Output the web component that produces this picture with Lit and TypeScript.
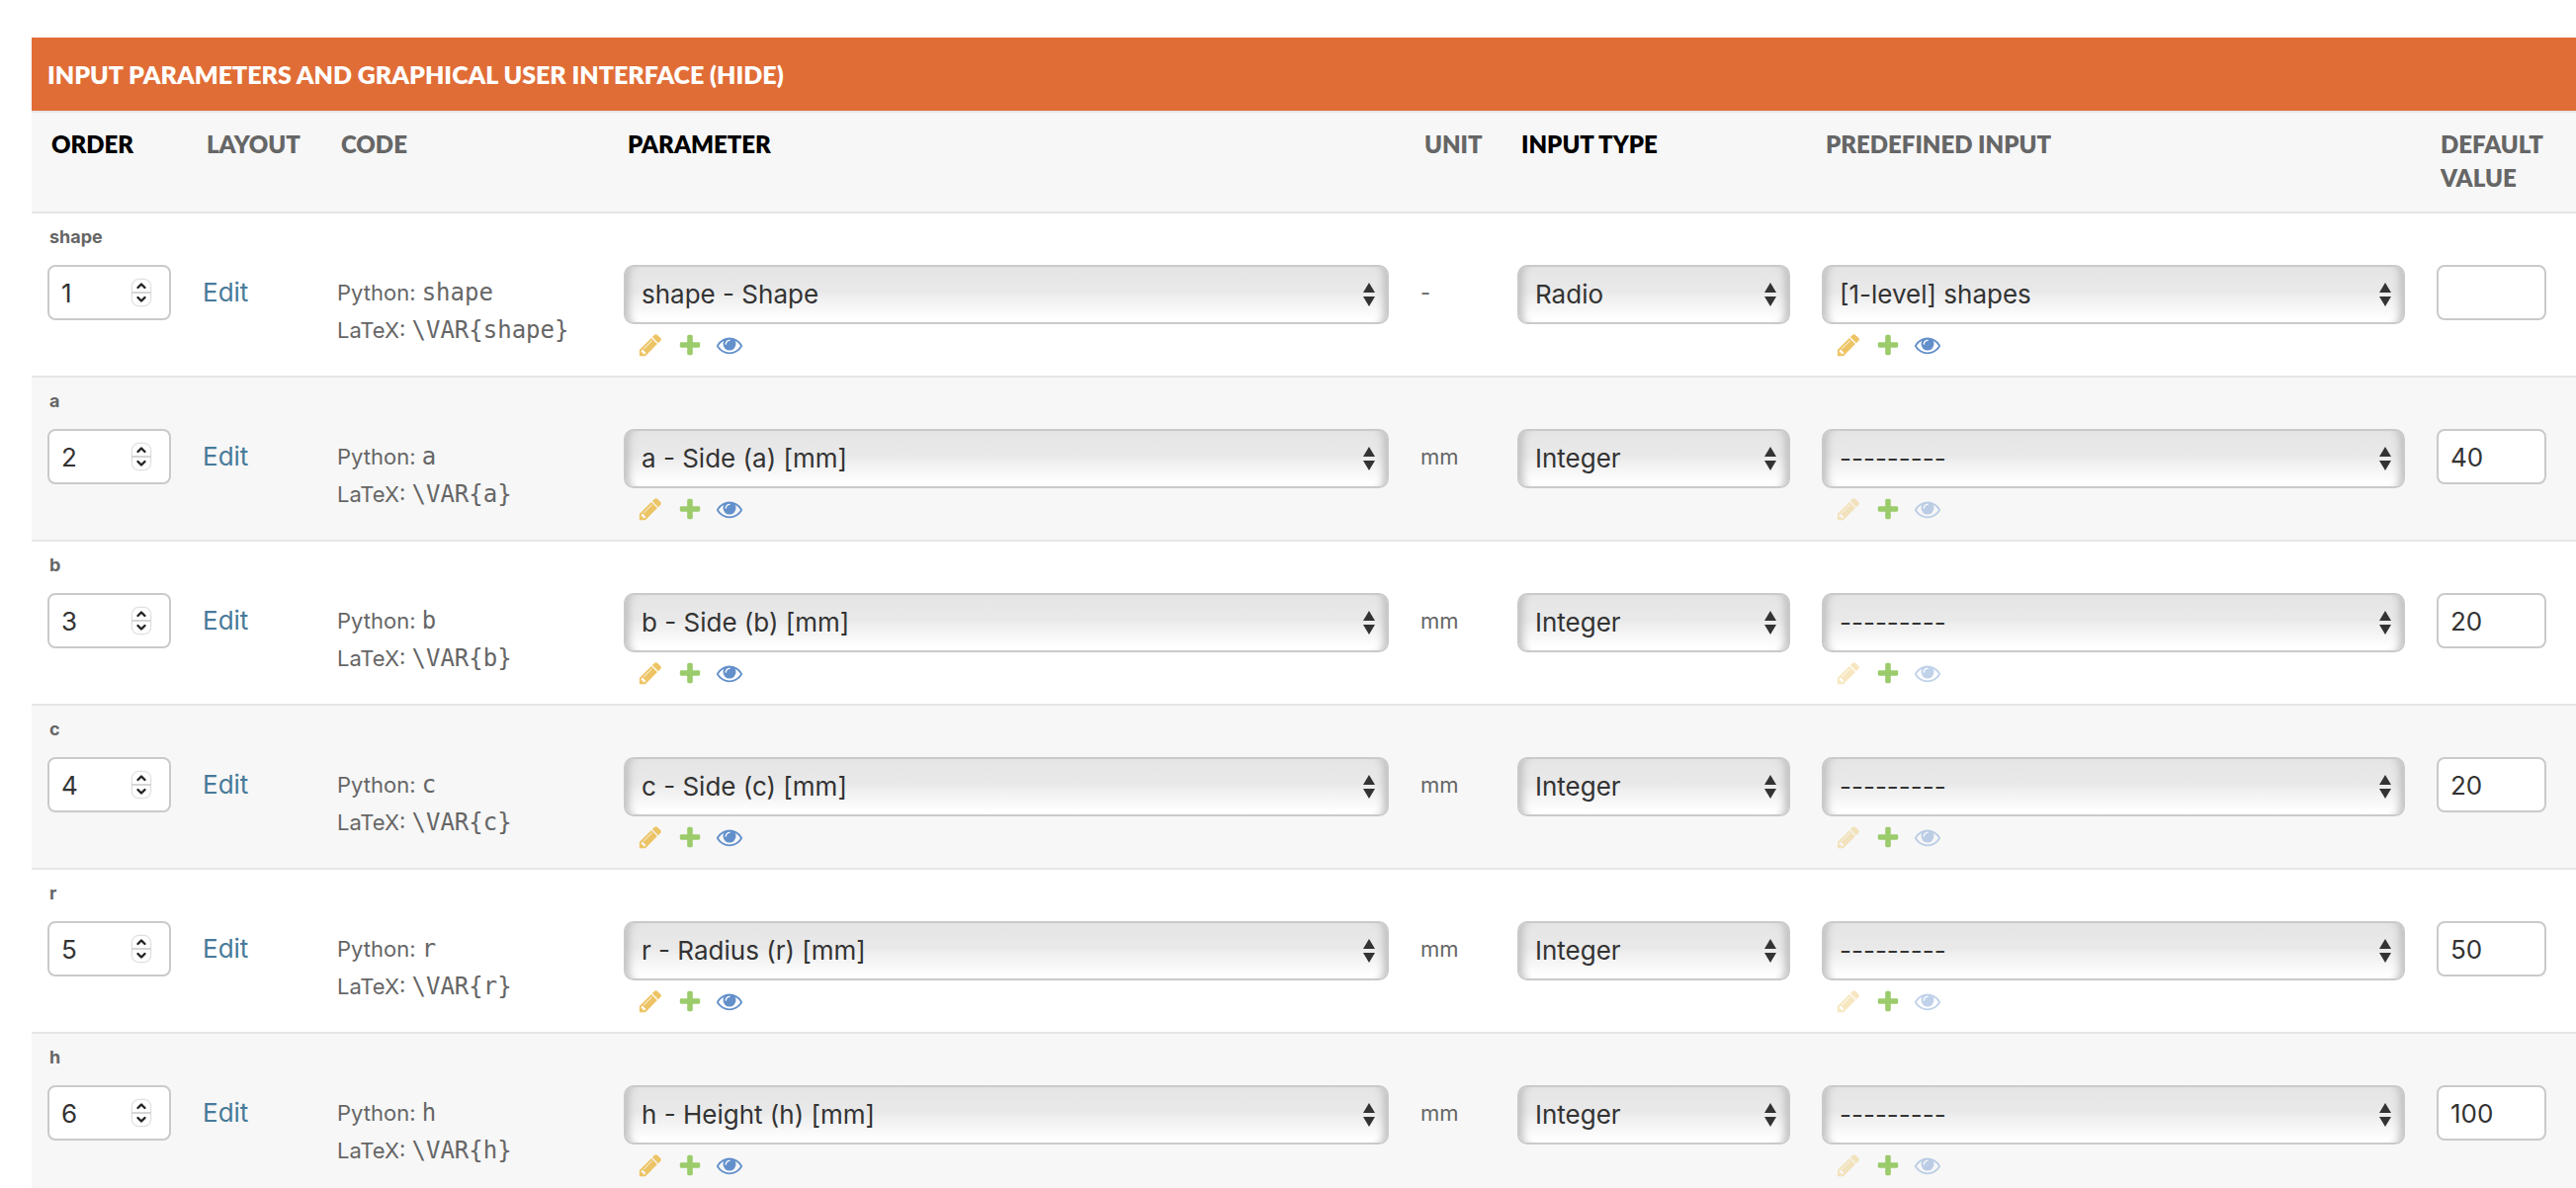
import { LitElement, html, css, svg } from "lit";
import { customElement, property } from "lit/decorators.js";
import { classMap } from "lit/directives/class-map.js";

interface Row {
  name: string;
  parameter: string;
  unit: string;
  type: string;
  predefined: string;
  value: string;
}

const EMPTY = "---------";

const ROWS: Row[] = [
  { name: "shape", parameter: "shape - Shape", unit: "-", type: "Radio", predefined: "[1-level] shapes", value: "" },
  { name: "a", parameter: "a - Side (a) [mm]", unit: "mm", type: "Integer", predefined: EMPTY, value: "40" },
  { name: "b", parameter: "b - Side (b) [mm]", unit: "mm", type: "Integer", predefined: EMPTY, value: "20" },
  { name: "c", parameter: "c - Side (c) [mm]", unit: "mm", type: "Integer", predefined: EMPTY, value: "20" },
  { name: "r", parameter: "r - Radius (r) [mm]", unit: "mm", type: "Integer", predefined: EMPTY, value: "50" },
  { name: "h", parameter: "h - Height (h) [mm]", unit: "mm", type: "Integer", predefined: EMPTY, value: "100" },
];

const PENCIL = svg`<path d="M491 1536l91-91-235-235-91 91v107h128v128h107zm523-928q0-22-22-22-10 0-17 7l-542 542q-7 7-7 17 0 22 22 22 10 0 17-7l542-542q7-7 7-17zm-54-192l416 416-832 832h-416v-416zm683 96q0 53-37 90l-166 166-416-416 166-165q36-38 90-38 53 0 91 38l235 234q37 39 37 91z"/>`;
const PLUS = svg`<path d="M1600 796v192q0 40-28 68t-68 28h-416v416q0 40-28 68t-68 28h-192q-40 0-68-28t-28-68v-416h-416q-40 0-68-28t-28-68v-192q0-40 28-68t68-28h416v-416q0-40 28-68t68-28h192q40 0 68 28t28 68v416h416q40 0 68 28t28 68z"/>`;
const EYE = svg`<path d="M1664 960q-152-236-381-353 61 104 61 225 0 185-131.500 316.500t-316.500 131.500-316.500-131.500-131.500-316.500q0-121 61-225-229 117-381 353 133 205 333.500 326.500t434.500 121.500 434.500-121.500 333.500-326.500zm-720-384q0-20-14-34t-34-14q-125 0-214.500 89.500t-89.500 214.500q0 20 14 34t34 14 34-14 14-34q0-86 61-147t147-61q20 0 34-14t14-34zm848 384q0 34-20 69-140 230-376.500 368.500t-499.500 138.500-499.500-139-376.500-368q-20-35-20-69t20-69q140-229 376.500-368t499.500-139 499.500 139 376.500 368q20 35 20 69z"/>`;

@customElement("select-field")
class SelectField extends LitElement {
  @property() label = "";
  @property() value = "";

  static styles = css`
    :host { display: block; }
    .field { display: grid; align-items: center; }
    select {
      grid-area: 1 / 1;
      box-sizing: border-box;
      width: 100%;
      height: 60px;
      margin: 0;
      padding: 0 40px 2px 16px;
      appearance: none;
      border: 2px solid #cacaca;
      border-radius: 10px;
      background: linear-gradient(#e5e5e5, #e9e9e9 45%, #efefef 55%, #ffffff 95%);
      box-shadow: inset 11px 0 8px -8px #bcbcbc, inset -11px 0 8px -8px #bcbcbc;
      font: 26px "Inter", "Liberation Sans", sans-serif;
      color: #333;
    }
    .arrows {
      grid-area: 1 / 1;
      justify-self: end;
      width: 12px;
      height: 24px;
      margin-right: 14px;
      fill: #333;
      pointer-events: none;
    }
  `;

  render() {
    return html`<div class="field">
      <select aria-label=${this.label}><option selected>${this.value}</option></select>
      <svg class="arrows" viewBox="0 0 12 24" aria-hidden="true"><path d="M6 0l6 10H0zM6 24l6-10H0z" /></svg>
    </div>`;
  }
}

@customElement("related-links")
class RelatedLinks extends LitElement {
  @property({ type: Boolean }) empty = false;

  static styles = css`
    :host { display: block; }
    .links { display: flex; gap: 14px; padding: 8px 14px 0; }
    .link { display: block; width: 26px; height: 26px; }
    .icon { display: block; width: 26px; height: 26px; }
    .change { fill: #edc465; }
    .add { fill: #9bcb6b; }
    .view { fill: #6390cb; }
    .off { opacity: 0.4; }
  `;

  render() {
    const off = this.empty;
    return html`<div class="links">
      <a class=${classMap({ link: true, change: true, off })} href="#change" aria-label="Change">
        <svg class="icon" viewBox="0 0 1792 1792">${PENCIL}</svg></a>
      <a class="link add" href="#add" aria-label="Add">
        <svg class="icon" viewBox="0 0 1792 1792">${PLUS}</svg></a>
      <a class=${classMap({ link: true, view: true, off })} href="#view" aria-label="View">
        <svg class="icon" viewBox="0 0 1792 1792">${EYE}</svg></a>
    </div>`;
  }
}

@customElement("app-root")
class AppRoot extends LitElement {
  static styles = css`
    :host {
      display: block;
      padding: 38px 0 0 32px;
      background: #fff;
      color: #666;
      font: 22px/38px "Inter", "Liberation Sans", sans-serif;
    }
    .title {
      margin: 0;
      padding: 18px 16px;
      background: #e16d36;
      color: #fff;
      font-family: "Lato", "Liberation Sans", sans-serif;
      font-size: 25px;
      font-weight: 800;
      text-transform: uppercase;
    }
    .toggle {
      padding: 0;
      border: 0;
      background: none;
      color: inherit;
      font: inherit;
      text-transform: inherit;
    }
    table { width: 100%; table-layout: fixed; border-collapse: separate; border-spacing: 0; }
    .order { width: 157px; }
    .layout { width: 136px; }
    .code { width: 290px; }
    .unit { width: 98px; }
    .type { width: 308px; }
    .predefined { width: 622px; }
    .default { width: 157px; }
    th {
      height: 104px;
      box-sizing: border-box;
      padding: 15px 18px 14px 20px;
      border: solid #e6e6e6;
      border-width: 2px 0;
      background: #f7f7f7;
      font-family: "Lato", "Liberation Sans", sans-serif;
      font-size: 24px;
      line-height: 34px;
      font-weight: 800;
      text-align: left;
      vertical-align: top;
      text-transform: uppercase;
      white-space: nowrap;
    }
    .wrap { white-space: normal; }
    .required { color: #000; }
    td {
      box-sizing: border-box;
      height: 166px;
      padding: 52px 16px 16px;
      border-bottom: 2px solid #e6e6e6;
      vertical-align: top;
    }
    .alt td { background: #f7f7f7; }
    td.first { padding-top: 10px; }
    td.text { padding-top: 61px; }
    .name {
      display: block;
      padding: 0 2px 14px;
      font-size: 18px;
      line-height: 28px;
      font-weight: 700;
    }
    .number { display: grid; align-items: center; }
    input {
      grid-area: 1 / 1;
      box-sizing: border-box;
      width: 100%;
      height: 56px;
      margin: 0;
      padding: 0 12px;
      border: 2px solid #cacaca;
      border-radius: 8px;
      background: #fff;
      color: #333;
      font: 26px "Inter", "Liberation Sans", sans-serif;
      appearance: textfield;
    }
    input::-webkit-inner-spin-button { appearance: none; }
    .value { width: 111px; }
    .stepper { grid-area: 1 / 1; justify-self: end; width: 24px; height: 32px; margin-right: 18px; pointer-events: none; }
    .edit { color: #487a99; font-size: 26px; text-decoration: none; }
    .line { white-space: nowrap; }
    code { font: 24px "DejaVu Sans Mono", monospace; line-height: 1; }
  `;

  private row(row: Row, index: number) {
    const n = index + 1;
    return html`<tr class=${classMap({ alt: index % 2 === 1 })}>
      <td class="first">
        <label class="name" for="order-${n}">${row.name}</label>
        <div class="number">
          <input id="order-${n}" type="number" .value=${String(n)} />
          <svg class="stepper" viewBox="0 0 24 32" aria-hidden="true">
            <rect x="1.500" y="1.500" width="21" height="29" rx="8" fill="#f0f0f0" />
            <rect x="2.500" y="2.500" width="19" height="27" rx="7" fill="#fff" stroke="#dedede" />
            <path d="M2 16h20" stroke="#d6d6d6" stroke-width="2" />
            <path d="M8.500 11l3.500-3.500 3.500 3.500M8.500 21l3.500 3.500 3.500-3.500" fill="none" stroke="#222" stroke-width="2.400" stroke-linecap="round" stroke-linejoin="round" />
          </svg>
        </div>
      </td>
      <td class="text"><a class="edit" href="#edit-${n}">Edit</a></td>
      <td class="text">
        <div class="line">Python: <code>${row.name}</code></div>
        <div class="line">LaTeX: <code>\\VAR{${row.name}}</code></div>
      </td>
      <td>
        <select-field label="Parameter" .value=${row.parameter}></select-field>
        <related-links></related-links>
      </td>
      <td class="text">${row.unit}</td>
      <td><select-field label="Input type" .value=${row.type}></select-field></td>
      <td>
        <select-field label="Predefined input" .value=${row.predefined}></select-field>
        <related-links ?empty=${row.predefined === EMPTY}></related-links>
      </td>
      <td><input class="value" type="text" aria-label="Default value" .value=${row.value} /></td>
    </tr>`;
  }

  render() {
    return html`
      <h2 class="title">Input parameters and graphical user interface (<button class="toggle" type="button">Hide</button>)</h2>
      <table>
        <colgroup>
          <col class="order" /><col class="layout" /><col class="code" /><col />
          <col class="unit" /><col class="type" /><col class="predefined" /><col class="default" />
        </colgroup>
        <thead>
          <tr>
            <th class="required">Order</th>
            <th>Layout</th>
            <th>Code</th>
            <th class="required">Parameter</th>
            <th>Unit</th>
            <th class="required">Input type</th>
            <th>Predefined input</th>
            <th class="wrap">Default value</th>
          </tr>
        </thead>
        <tbody>${ROWS.map((row, index) => this.row(row, index))}</tbody>
      </table>
    `;
  }
}
